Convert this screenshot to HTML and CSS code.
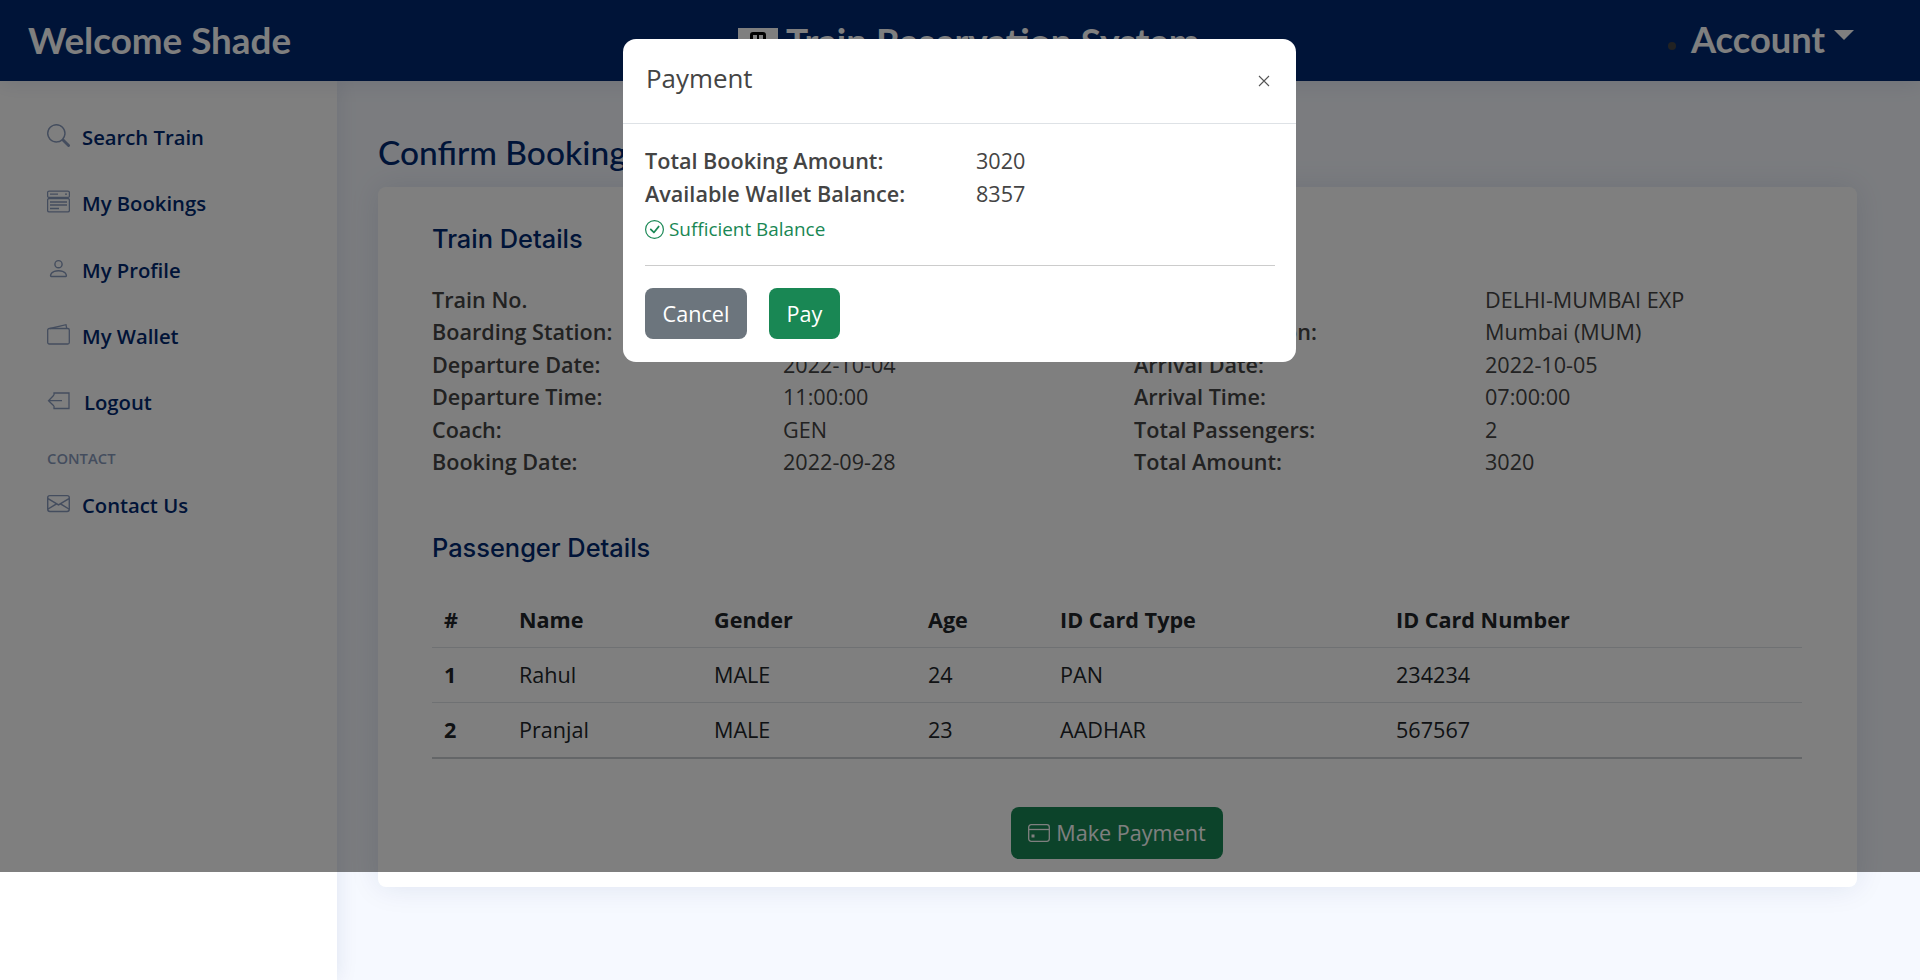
FILE: index.html
```html
<!DOCTYPE html>
<html lang="en">
<head>
<meta charset="utf-8">
<title>Train Reservation System</title>
<link rel="stylesheet" href="styles.css">
</head>
<body>
<header class="topbar">
  <div class="brand">Welcome Shade</div>
  <div class="system">
    <svg class="logo" viewBox="0 0 40 40"><rect width="40" height="40" fill="#fff"/><path d="M15 4h10a3 3 0 0 1 3 3v23H12V7a3 3 0 0 1 3-3zm0 3v5h4V7zm6 0v5h4V7z" fill="#000" fill-rule="evenodd"/></svg>
    <span class="system-name">Train Reservation System</span>
  </div>
  <div class="account"><span class="dot"></span><span>Account</span><span class="caret"></span></div>
</header>
<div class="layout">
  <aside class="sidebar">
    <a class="nav-item"><svg class="icon" viewBox="0 0 16 16"><path d="M11.742 10.344a6.5 6.5 0 1 0-1.397 1.398h-.001c.03.04.062.078.098.115l3.85 3.85a1 1 0 0 0 1.415-1.414l-3.85-3.85a1.007 1.007 0 0 0-.115-.1zM12 6.5a5.5 5.5 0 1 1-11 0 5.5 5.5 0 0 1 11 0z"/></svg>Search Train</a>
    <a class="nav-item"><svg class="icon outline" viewBox="0 0 23 22"><rect x=".6" y=".6" width="21.800" height="6.300" rx="1.500"/><rect x=".6" y="8" width="21.800" height="13.300" rx="1.500"/><path d="M3 3.700h8M18 3.700h2M3 11.500h17M3 14.500h17M3 18h9"/></svg>My Bookings</a>
    <a class="nav-item"><svg class="icon" viewBox="0 0 16 16"><path d="M8 8a3 3 0 1 0 0-6 3 3 0 0 0 0 6zm2-3a2 2 0 1 1-4 0 2 2 0 0 1 4 0zm4 8c0 1-1 1-1 1H3s-1 0-1-1 1-4 6-4 6 3 6 4zm-1-.004c-.001-.246-.154-.986-.832-1.664C11.516 10.68 10.289 10 8 10c-2.29 0-3.516.68-4.168 1.332-.678.678-.83 1.418-.832 1.664h10z"/></svg>My Profile</a>
    <a class="nav-item"><svg class="icon outline" viewBox="0 0 23 22"><rect x=".7" y="5" width="21.600" height="15.500" rx="1.500"/><path d="M3 5 19 1.200l.7 3.800"/></svg>My Wallet</a>
    <a class="nav-item logout"><svg class="icon outline" viewBox="0 0 23 22"><path d="M7 5.500V3.500h15v15.500H7v-2.500M15 11.200H2M7 5.500 1.500 11.200 7 16.500"/></svg>Logout</a>
    <div class="nav-heading">CONTACT</div>
    <a class="nav-item"><svg class="icon" viewBox="0 0 16 16"><path d="M0 4a2 2 0 0 1 2-2h12a2 2 0 0 1 2 2v8a2 2 0 0 1-2 2H2a2 2 0 0 1-2-2V4Zm2-1a1 1 0 0 0-1 1v.217l7 4.200 7-4.200V4a1 1 0 0 0-1-1H2Zm13 2.383-4.708 2.825L15 11.105V5.383Zm-.034 6.876-5.640-3.471L8 9.583l-1.326-.795-5.640 3.470A1 1 0 0 0 2 13h12a1 1 0 0 0 .966-.741ZM1 11.105l4.708-2.897L1 5.383v5.722Z"/></svg>Contact Us</a>
  </aside>
  <main class="main">
    <h1 class="page-title">Confirm Booking</h1>
    <section class="card">
      <h2 class="section-title">Train Details</h2>
      <div class="details">
        <b>Train No.</b><span>12951</span><b>Train Name:</b><span>DELHI-MUMBAI EXP</span>
        <b>Boarding Station:</b><span>Delhi (DLI)</span><b>Dropping Station:</b><span>Mumbai (MUM)</span>
        <b>Departure Date:</b><span>2022-10-04</span><b>Arrival Date:</b><span>2022-10-05</span>
        <b>Departure Time:</b><span>11:00:00</span><b>Arrival Time:</b><span>07:00:00</span>
        <b>Coach:</b><span>GEN</span><b>Total Passengers:</b><span>2</span>
        <b>Booking Date:</b><span>2022-09-28</span><b>Total Amount:</b><span>3020</span>
      </div>
      <h2 class="section-title passengers">Passenger Details</h2>
      <table class="table">
        <colgroup><col class="c1"><col class="c2"><col class="c3"><col class="c4"><col class="c5"><col class="c6"></colgroup>
        <thead><tr><th>#</th><th>Name</th><th>Gender</th><th>Age</th><th>ID Card Type</th><th>ID Card Number</th></tr></thead>
        <tbody>
          <tr><th>1</th><td>Rahul</td><td>MALE</td><td>24</td><td>PAN</td><td>234234</td></tr>
          <tr><th>2</th><td>Pranjal</td><td>MALE</td><td>23</td><td>AADHAR</td><td>567567</td></tr>
        </tbody>
      </table>
      <div class="pay-row">
        <button class="btn btn-dark-green"><svg class="card-icon" viewBox="0 0 22 18"><rect x=".7" y=".7" width="20.600" height="16.600" rx="2.500"/><path d="M.7 5.500h20.600"/><rect x="3.500" y="10.500" width="3" height="3" class="fill"/></svg>Make Payment</button>
      </div>
    </section>
  </main>
</div>
<div class="backdrop"></div>
<div class="modal">
  <div class="modal-header">
    <span class="modal-title">Payment</span>
    <svg class="close" viewBox="0 0 12 12"><path d="M1 1l10 10M11 1 1 11"/></svg>
  </div>
  <div class="modal-body">
    <div class="amount"><b>Total Booking Amount:</b><span>3020</span></div>
    <div class="amount"><b>Available Wallet Balance:</b><span>8357</span></div>
    <div class="sufficient"><svg class="check" viewBox="0 0 16 16"><path d="M8 15A7 7 0 1 1 8 1a7 7 0 0 1 0 14zm0 1A8 8 0 1 0 8 0a8 8 0 0 0 0 16z"/><path d="M10.970 4.970a.235.235 0 0 0-.020.022L7.477 9.417 5.384 7.323a.750.750 0 0 0-1.060 1.060L6.970 11.030a.750.750 0 0 0 1.079-.020l3.992-4.990a.750.750 0 0 0-1.071-1.050z"/></svg>Sufficient Balance</div>
    <hr class="divider">
    <div class="modal-actions">
      <button class="btn btn-grey">Cancel</button>
      <button class="btn btn-green">Pay</button>
    </div>
  </div>
</div>
</body>
</html>
```
FILE: styles.css
```css
* { box-sizing: border-box; }
html { margin: 0; }
body {
  margin: 0;
  height: 980px;
  overflow: hidden;
  position: relative;
  font-family: "Open Sans", sans-serif;
  font-size: 21.600px;
  color: #444;
  background: #fff;
}
.topbar {
  height: 81px;
  background: #012970;
  color: #fff;
  display: grid;
  grid-template-columns: 710px 1fr auto;
  align-items: center;
  padding: 0 66px 0 28px;
  font-family: Lato, sans-serif;
  font-weight: 700;
  font-size: 36.800px;
  position: relative;
  z-index: 2;
  box-shadow: 0 2px 20px rgba(1, 41, 112, .1);
}
.brand { margin-top: -2px; }
.system { display: flex; align-items: center; gap: 8px; height: 40px; margin-top: 14px; }
.system-name { margin-top: -15px; font-size: 37px; }
.logo { width: 40px; height: 40px; }
.account { display: flex; align-items: center; margin-top: -3px; font-size: 36.300px; }
.dot { width: 8px; height: 8px; border-radius: 50%; background: #444; margin: 13px 15px 0 0; }
.caret {
  width: 0; height: 0; margin: -8px 0 0 9px;
  border-left: 10px solid transparent;
  border-right: 10px solid transparent;
  border-top: 10px solid #fff;
}
.layout { display: grid; grid-template-columns: 337px 1fr; height: 899px; }
.sidebar {
  background: #fff;
  padding: 33px 0 0 47px;
  box-shadow: 0 0 20px rgba(1, 41, 112, .1);
  position: relative;
  z-index: 1;
}
.nav-item {
  display: flex; align-items: center; gap: 12px;
  height: 46px; margin-bottom: 20.300px;
  color: #012970; font-size: 20.250px; font-weight: 600;
}
.nav-item.logout { gap: 14px; margin-bottom: 21px; }
.icon { width: 23px; height: 23px; flex: none; fill: #899bbd; margin-top: -3px; }
.icon.outline { fill: none; stroke: #899bbd; stroke-width: 1.300; }
.nav-heading { font-size: 14.800px; font-weight: 600; color: #899bbd; height: 24px; line-height: 24px; margin-bottom: 12px; }
.main { background: #f6f9ff; padding: 47px 63px 0 41px; }
.page-title {
  margin: 0 0 19px; height: 40px; line-height: 48px;
  font-family: Lato, sans-serif; font-weight: 500; font-size: 33.500px; color: #012970;
}
.card {
  height: 700px; background: #fff; border-radius: 8px;
  box-shadow: 0 0 30px rgba(1, 41, 112, .1);
  padding: 34px 55px 0 54px;
}
.section-title {
  margin: 0; font-family: Inter, sans-serif; font-weight: 500; font-size: 25.400px;
  line-height: 36px; color: #012970;
}
.details {
  display: grid; grid-template-columns: 351px 351px 351px 1fr;
  margin-top: 27px; line-height: 32.400px;
}
.details b { font-weight: 600; }
.passengers { margin-top: 52px; }
.table { width: 100%; table-layout: fixed; border-collapse: collapse; margin-top: 26.500px; color: #212529; }
.c1 { width: 75px; } .c2 { width: 195px; } .c3 { width: 214px; }
.c4 { width: 132px; } .c5 { width: 336px; }
.table th, .table td { padding: 10.800px 12px; line-height: 32.400px; text-align: left; border-bottom: 1px solid #dee2e6; }
.table th { font-weight: 700; }
.table td { font-weight: 400; }
.table tbody tr:last-child th, .table tbody tr:last-child td { border-bottom: 2px solid #c8ccd0; }
.pay-row { display: flex; justify-content: center; margin-top: 48px; }
.btn {
  font: inherit; color: #fff; border: 0; border-radius: 8px;
  display: inline-flex; align-items: center; justify-content: center;
}
.btn-dark-green { width: 212px; height: 52px; background: #198754; }
.card-icon { width: 22px; height: 18px; margin-right: 6px; fill: none; stroke: #fff; stroke-width: 1.300; flex: none; }
.card-icon .fill { fill: #fff; stroke: none; }
.backdrop { position: absolute; left: 0; top: 0; width: 1920px; height: 872px; background: rgba(0, 0, 0, .5); z-index: 3; }
.modal {
  position: absolute; left: 623px; top: 39px; width: 673px; height: 323px;
  background: #fff; border-radius: 13px; z-index: 4;
}
.modal-header {
  height: 85px; border-bottom: 1px solid #dee2e6;
  display: flex; align-items: center; justify-content: space-between;
  padding: 0 26px 7px 23px;
}
.modal-title { font-size: 25.900px; font-weight: 400; color: #444; }
.close { width: 12px; height: 12px; stroke: #555; stroke-width: 1.100; margin-top: 6px; }
.modal-body { padding: 20px 21px 0 22px; }
.amount { display: grid; grid-template-columns: 331px 1fr; line-height: 33px; }
.amount b { font-weight: 600; }
.sufficient { display: flex; align-items: center; gap: 5px; margin-top: 5px; height: 28px; font-size: 18.900px; color: #198754; }
.check { width: 19px; height: 19px; fill: #198754; }
.divider { border: 0; border-top: 1px solid #ccc; margin: 22px 0 22px; }
.modal-actions { display: flex; gap: 22px; }
.btn-grey { width: 102px; height: 51px; background: #6c757d; }
.btn-green { width: 71px; height: 51px; background: #198754; }
```
